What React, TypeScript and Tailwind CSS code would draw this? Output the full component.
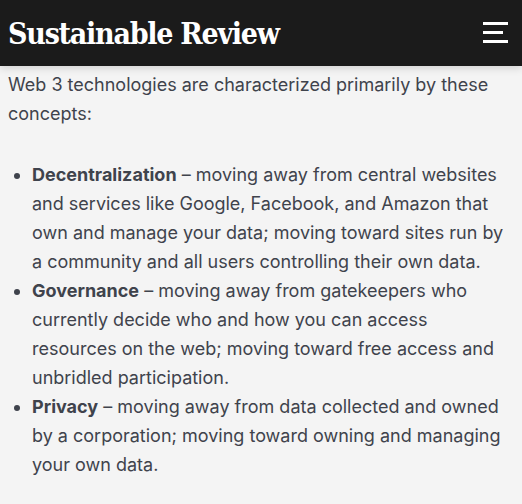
import React from 'react';

const items = [
  {
    term: 'Decentralization',
    text: 'moving away from central websites and services like Google, Facebook, and Amazon that own and manage your data; moving toward sites run by a community and all users controlling their own data.',
  },
  {
    term: 'Governance',
    text: 'moving away from gatekeepers who currently decide who and how you can access resources on the web; moving toward free access and unbridled participation.',
  },
  {
    term: 'Privacy',
    text: 'moving away from data collected and owned by a corporation; moving toward owning and managing your own data.',
  },
];

export default function App() {
  return (
    <div className="min-h-[504px] bg-[#f4f4f4] font-['Inter',sans-serif] text-[#3f434c]">
      {/* Header */}
      <header className="h-[66px] bg-[#1b1b1b] flex items-center justify-between pl-2 pr-[14px] shadow-[0_2px_8px_rgba(0,0,0,0.15)] relative">
        <h1 className="font-['DejaVu_Serif',serif] font-bold text-white text-[30px] leading-none tracking-[-1.25px] [font-stretch:condensed] pt-[2px]">
          Sustainable Review
        </h1>
        <button className="flex flex-col items-start gap-[6px] w-[25px] -mt-[1px]">
          <span className="block h-[3px] w-[25px] bg-white" />
          <span className="block h-[3px] w-[20px] bg-white" />
          <span className="block h-[3px] w-[25px] bg-white" />
        </button>
      </header>

      {/* Article */}
      <main className="px-2 text-[18px] leading-[29px]">
        <p className="pt-[4px] mb-8">
          Web 3 technologies are characterized primarily by these concepts:
        </p>
        <ul className="list-disc pl-6">
          {items.map((item) => (
            <li key={item.term}>
              <strong className="font-bold">{item.term}</strong> – {item.text}
            </li>
          ))}
        </ul>
      </main>
    </div>
  );
}
